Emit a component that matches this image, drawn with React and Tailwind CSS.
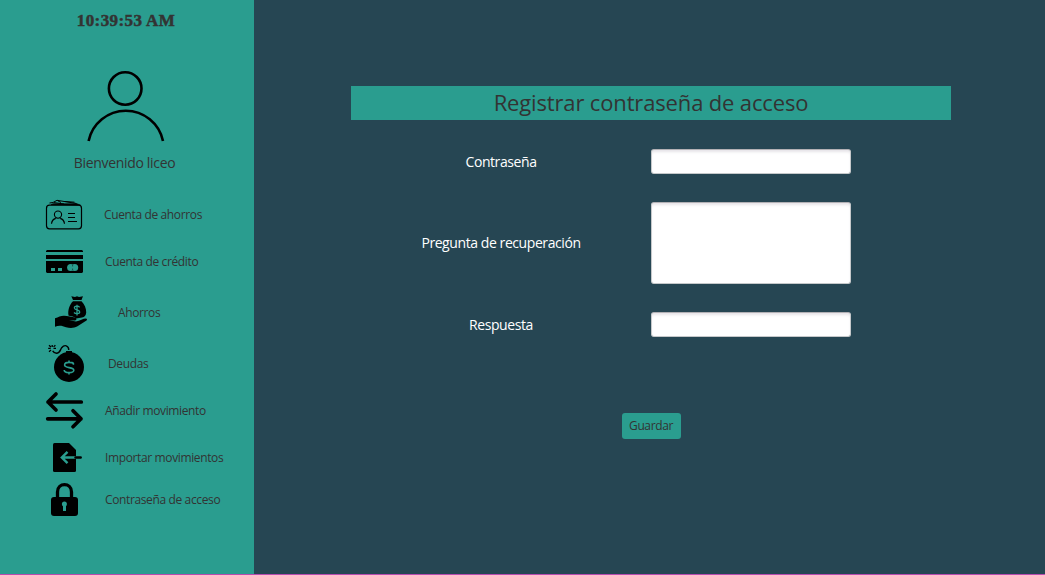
import React from "react";

const UserIcon = () => (
  <svg className="h-[80px] w-[90px]" viewBox="80 66 90 80" fill="none" stroke="#000" strokeWidth="2.6">
    <circle cx="125.2" cy="88.5" r="16.3" />
    <path d="M88.6 141 A38 38 0 0 1 163 141" />
  </svg>
);

const SavingsCard = () => (
  <>
    <rect x="46.5" y="205.2" width="35" height="23.6" rx="3" fill="none" stroke="#000" strokeWidth="1.2" />
    <path d="M51 204.7 L53 203.7 L77 203.7 L80.5 205.2 Z" fill="#000" stroke="#000" strokeWidth="0.6" />
    <path d="M49.5 203 L53 202.5 M53 202.5 L57 200.3 L76.5 203.5 M54 202.6 L64 204 M57.5 200.6 L61 202.5 M65 201.5 L74.5 202.2" fill="none" stroke="#000" strokeWidth="1" />
    <circle cx="58" cy="214.6" r="3.6" fill="none" stroke="#000" strokeWidth="1.1" />
    <path d="M51.5 223.8 C51.8 220.8 53.4 219 55.8 218.3 M60.2 218.3 C62.6 219 64.2 220.8 64.5 223.8" fill="none" stroke="#000" strokeWidth="1.2" />
    <path d="M68 213.5 H75 M68 217.5 H75 M68 221.5 H77" stroke="#000" strokeWidth="1" />
  </>
);

const CreditCard = () => (
  <>
    <path d="M47 250 H82 L83 251 V252 H46 V251 Z M46 255 H83 V259 H46 Z M46 261 H83 V272 L82 273 H47 L46 272 Z" fill="#000" />
    <path d="M51 268 H55 V271 H51 Z M58 268 H62 V271 H58 Z" fill="#2a9d8f" />
    <circle cx="70.6" cy="267.5" r="3.5" fill="#2a9d8f" />
    <circle cx="74.7" cy="267.5" r="3.5" fill="#2a9d8f" />
    <path d="M72.6 265.3 V266.3 M72.6 268.7 V269.7" stroke="#000" strokeWidth="0.7" />
  </>
);

const MoneyHand = () => (
  <>
    <path d="M71.3 296.2 L75 297 L77 296.2 L79 297 L83 296.2 L81.5 300 H73 Z" fill="#000" />
    <path d="M73 301.2 H81.5 C84.5 304 86.4 308.5 86.2 312.5 C86 315.5 84.5 317 82 317.4 L76 318.5 C74 316.6 71.5 316 68.6 315.8 C67.5 310.5 69.5 304.5 73 301.2 Z" fill="#000" />
    <path d="M55 318.3 C58.5 317 61 315.6 64 315.7 C67.5 316.2 72 316.4 75 317.6 C77 318.6 76.8 320.4 75 320.5 L69 320.3 L76 321.6 C80 320.6 83 318.4 86 318.4 C87.8 318.9 87 320.2 85.7 321 L77.5 326.3 C74 328.3 70 328.3 66 327.3 C62.5 326 59.5 325 55 326.8 Z" fill="#000" />
    <path d="M79.6 307.3 C78.5 305.8 74.3 305.7 74.4 308 C74.6 310.6 79.7 309.3 79.7 312 C79.6 314.2 75.3 314 74 312.5 M77 304.7 V315.4" fill="none" stroke="#2a9d8f" strokeWidth="1.3" />
  </>
);

const DebtBomb = () => (
  <>
    <circle cx="69" cy="367" r="15" fill="#000" />
    <path d="M66 351 H72 V355 H66 Z" fill="#000" />
    <path d="M68.8 350 C68.7 345.3 64.4 344.3 61.7 347.7 C60 350.2 60 353.2 56.5 353.2 C54.7 353.2 53.5 352.2 52.7 350.8" fill="none" stroke="#000" strokeWidth="1.4" />
    <path d="M48.2 348.3 H50.7 M53.5 348.3 H56 M49 345.2 L50.9 346.9 M55.4 345.2 L53.6 346.9 M52.2 345 V347 M49 351.7 L51 350" fill="none" stroke="#000" strokeWidth="1.3" />
    <path d="M73.4 364.7 V363.5 C72.9 362.7 71.5 362.4 69 362.4 C66 362.4 64.6 363.3 64.6 365 C64.6 368.6 73.8 366.6 73.8 370.3 C73.8 372 71.5 372.6 69 372.6 C66 372.6 64.2 371.8 64.2 370 M69 360.5 V362.5 M69 372.5 V374.5" fill="none" stroke="#2a9d8f" strokeWidth="1.6" />
  </>
);

const SwapArrows = () => (
  <path d="M81.3 402 H48 M56 394 L48 402 L56 410 M47.7 418.8 H81 M73 410.8 L81 418.8 L73 426.8" fill="none" stroke="#000" strokeWidth="3.7" strokeLinecap="round" strokeLinejoin="round" />
);

const ImportFile = () => (
  <>
    <path d="M54.5 443 H69 L76 450 V470.5 Q76 472 74.5 472 H54.5 Q53 472 53 470.5 V444.5 Q53 443 54.5 443 Z" fill="#000" />
    <path d="M76 457.5 H62 M67.5 451.8 L61.8 457.5 L67.5 463.2" fill="none" stroke="#2a9d8f" strokeWidth="2.4" />
    <path d="M75.5 457.5 H80.7" stroke="#000" strokeWidth="2.4" strokeLinecap="round" />
  </>
);

const Padlock = () => (
  <>
    <rect x="51" y="497" width="27" height="19" rx="3" fill="#000" />
    <path d="M57.5 498 V492 C57.5 482.3 71.5 482.3 71.5 492 V498" fill="none" stroke="#000" strokeWidth="3.3" />
    <circle cx="64.4" cy="504" r="2.5" fill="#2a9d8f" />
    <path d="M63 504 H66 V511 H63 Z" fill="#2a9d8f" />
  </>
);

const items = [
  { label: "Cuenta de ahorros", Icon: SavingsCard, box: "40 191 50 47", height: "h-[47px]", pad: "pl-[14px]" },
  { label: "Cuenta de crédito", Icon: CreditCard, box: "40 238 50 48", height: "h-[48px]", pad: "pl-[15px]" },
  { label: "Ahorros", Icon: MoneyHand, box: "40 286 50 54", height: "h-[54px]", pad: "pl-[28px]" },
  { label: "Deudas", Icon: DebtBomb, box: "40 340 50 48", height: "h-[48px]", pad: "pl-[18px]" },
  { label: "Añadir movimiento", Icon: SwapArrows, box: "40 388 50 46", height: "h-[46px]", pad: "pl-[15px]" },
  { label: "Importar movimientos", Icon: ImportFile, box: "40 434 50 48", height: "h-[48px]", pad: "pl-[15px]" },
  { label: "Contraseña de acceso", Icon: Padlock, box: "40 482 50 36", height: "h-[36px]", pad: "pl-[15px]" },
];

const field =
  "block w-[200px] resize-none rounded-[3px] border border-[#c5c8ca] border-t-[#b3b1b5] bg-white px-2 text-[13px] text-[#333] outline-none shadow-[inset_0_3px_3px_-1px_#e6e4e8]";

const caption = "text-center leading-[20px] tracking-[-0.42px]";

export default function App() {
  return (
    <div className="flex h-[575px] w-[1045px] flex-col overflow-hidden bg-[#264653] font-['Open_Sans','Noto_Sans',sans-serif] text-[#333]">
      <div className="flex h-[574px]">
        <aside className="flex w-[254px] flex-col bg-[#2a9d8f]">
          <div className="flex h-[66px] justify-center pt-[11px] pr-[2px]">
            <time className="h-[20px] font-['Liberation_Serif',serif] text-[17px] leading-[20px] font-bold tracking-[0.4px] whitespace-nowrap [-webkit-text-stroke:0.5px_#333]">
              10:39:53 AM
            </time>
          </div>
          <div className="flex justify-center pr-[4px]">
            <UserIcon />
          </div>
          <p className="h-[45px] pt-[7px] pr-[5px] text-center text-[14px] leading-[20px] tracking-[-0.32px]">Bienvenido liceo</p>
          <nav>
            {items.map(({ label, Icon, box, height, pad }) => (
              <a key={label} className={`flex items-center pl-[40px] ${height}`}>
                <svg className={`w-[50px] shrink-0 ${height}`} viewBox={box}>
                  <Icon />
                </svg>
                <span className={`text-[12px] leading-[16px] tracking-[-0.37px] whitespace-nowrap ${pad}`}>{label}</span>
              </a>
            ))}
          </nav>
        </aside>
        <main className="flex flex-1 flex-col pt-[86px] pl-[97px]">
          <h1 className="h-[34px] w-[600px] bg-[#2a9d8f] text-center text-[22px] leading-[32px] tracking-[-0.15px]">
            Registrar contraseña de acceso
          </h1>
          <form className="flex w-[600px] flex-col pt-[29px] text-[14px] text-white">
            <div className="grid grid-cols-2 items-center">
              <label className={caption}>Contraseña</label>
              <input className={`h-[25px] ${field}`} />
            </div>
            <div className="grid grid-cols-2 items-center pt-[28px]">
              <label className={caption}>Pregunta de recuperación</label>
              <textarea className={`h-[82px] ${field}`} />
            </div>
            <div className="grid grid-cols-2 items-center pt-[28px]">
              <label className={caption}>Respuesta</label>
              <input className={`h-[25px] ${field}`} />
            </div>
            <div className="flex justify-center pt-[76px]">
              <button type="button" className="h-[26px] w-[59px] rounded-[3px] bg-[#2a9d8f] text-[12px] leading-[26px] tracking-[-0.38px] text-[#333]">
                Guardar
              </button>
            </div>
          </form>
        </main>
      </div>
      <div className="h-px bg-[#b74cb0]" />
    </div>
  );
}
